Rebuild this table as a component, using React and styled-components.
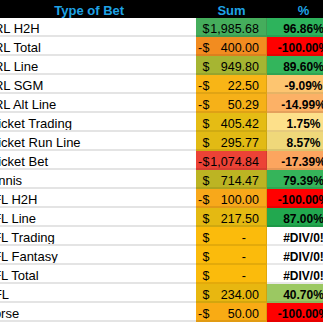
import React from "react";
import styled, { createGlobalStyle } from "styled-components";

const GlobalStyle = createGlobalStyle`
  html, body {
    margin: 0;
    padding: 0;
    background: #ffffff;
    overflow: hidden;
  }
  body {
    font-family: "Liberation Sans", Arial, sans-serif;
  }
`;

const Sheet = styled.div`
  display: grid;
  grid-template-columns: 213.5px 71px 73px;
  margin-left: -17.5px;
  width: 357.5px;
`;

const HeaderCell = styled.div`
  background: #000;
  color: #1fa3e5;
  font-weight: bold;
  font-size: 13px;
  line-height: 14px;
  height: 18px;
  box-sizing: border-box;
  padding-top: 4px;
  text-align: center;
  white-space: nowrap;
`;

const LabelCell = styled.div`
  height: 19px;
  box-sizing: border-box;
  border-bottom: 2px solid #e4e4e4;
  padding: 5px 0 0 2px;
  font-size: 13px;
  line-height: 12px;
  color: #000;
  white-space: nowrap;
  overflow: hidden;
`;

const SumCell = styled.div`
  height: 19px;
  box-sizing: border-box;
  background: ${(p) => p.$bg};
  border-bottom: 2px solid rgba(0, 0, 0, 0.09);
  border-right: 1px solid rgba(0, 0, 0, 0.1);
  padding: 5px 7px 0 2px;
  font-size: 12.5px;
  line-height: 12px;
  color: #000;
  display: flex;
  justify-content: space-between;
  white-space: nowrap;
`;

const Currency = styled.span`
  display: flex;
`;

const Sign = styled.span`
  width: 4.5px;
`;

const Amount = styled.span`
  margin-right: ${(p) => (p.$zero ? "13px" : "0")};
`;

const PctCell = styled.div`
  height: 19px;
  box-sizing: border-box;
  background: ${(p) => p.$bg};
  border-bottom: 2px solid rgba(0, 0, 0, 0.09);
  padding-top: 6px;
  font-size: 12px;
  font-weight: bold;
  line-height: 11px;
  color: #000;
  text-align: center;
  white-space: nowrap;
`;

const rows = [
  ["NRL H2H", false, "1,985.68", "#45ad5c", "96.86%", "#2db35c"],
  ["NRL Total", true, "400.00", "#f28c20", "-100.00%", "#ff0000"],
  ["NRL Line", false, "949.80", "#a6b532", "89.60%", "#33b55c"],
  ["NRL SGM", true, "22.50", "#f8b516", "-9.09%", "#fdc570"],
  ["NRL Alt Line", true, "50.29", "#f6b118", "-14.99%", "#fcb166"],
  ["Cricket Trading", false, "405.42", "#e5bc14", "1.75%", "#fde08a"],
  ["Cricket Run Line", false, "295.77", "#e2ba14", "8.57%", "#efd87a"],
  ["Cricket Bet", true, "1,074.84", "#ec4236", "-17.39%", "#fca55f"],
  ["Tennis", false, "714.47", "#bcb423", "79.39%", "#35b45a"],
  ["AFL H2H", true, "100.00", "#f8a81a", "-100.00%", "#ff0000"],
  ["AFL Line", false, "217.50", "#e4b912", "87.00%", "#22a84f"],
  ["AFL Trading", false, null, "#fbbb0c", "#DIV/0!", "#ffffff"],
  ["AFL Fantasy", false, null, "#fbbb0c", "#DIV/0!", "#ffffff"],
  ["AFL Total", false, null, "#fbbb0c", "#DIV/0!", "#ffffff"],
  ["NFL", false, "234.00", "#e8b710", "40.70%", "#9bc862"],
  ["Horse", true, "50.00", "#f9ab14", "-100.00%", "#ff0000"],
];

export default function App() {
  return (
    <>
      <GlobalStyle />
      <Sheet>
        <HeaderCell>Type of Bet</HeaderCell>
        <HeaderCell>Sum</HeaderCell>
        <HeaderCell>%</HeaderCell>
        {rows.map(([label, neg, amount, sumBg, pct, pctBg]) => (
          <React.Fragment key={label}>
            <LabelCell>{label}</LabelCell>
            <SumCell $bg={sumBg}>
              <Currency>
                <Sign>{neg ? "-" : ""}</Sign>$
              </Currency>
              <Amount $zero={amount === null}>{amount === null ? "-" : amount}</Amount>
            </SumCell>
            <PctCell $bg={pctBg}>{pct}</PctCell>
          </React.Fragment>
        ))}
      </Sheet>
    </>
  );
}
